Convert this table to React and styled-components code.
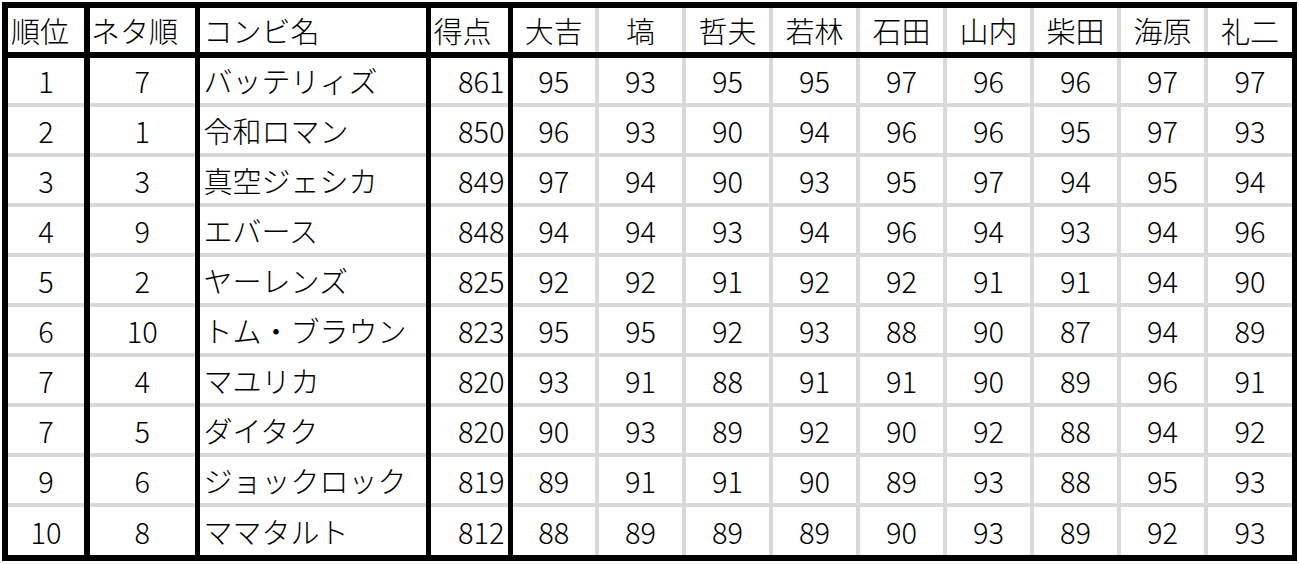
import React from "react";
import styled, { createGlobalStyle } from "styled-components";

const GlobalStyle = createGlobalStyle`
  html, body {
    margin: 0;
    padding: 0;
    background: #ffffff;
  }
  body {
    font-family: "Noto Sans CJK JP", "Noto Sans", sans-serif;
    color: #000;
  }
`;

const LINE = {
  thick: "6px solid #000",
  bold: "5px solid #000",
  thin: "4px solid #d9d9d9",
  none: "none",
};

const Frame = styled.div`
  margin: 2px 0 0 2px;
  width: fit-content;
  border-top: 6px solid #000;
  border-left: 6px solid #000;
  border-right: 5px solid #000;
  border-bottom: 6px solid #000;
`;

const ScoreTable = styled.table`
  border-collapse: collapse;
  table-layout: fixed;
  width: 1284px;
  font-size: 29px;
  font-weight: 300;
  line-height: 1;
`;

const HeadRow = styled.tr`
  height: 47px;
`;

const BodyRow = styled.tr`
  height: 50px;
`;

const Cell = styled.td`
  padding: 0 ${(p) => p.$padR || 0}px 0 ${(p) => p.$padL || 0}px;
  text-align: ${(p) => p.$align || "center"};
  vertical-align: middle;
  white-space: nowrap;
  overflow: hidden;
  font-weight: 300;
  border-right: ${(p) => LINE[p.$right || "none"]};
  border-bottom: ${(p) => LINE[p.$bottom || "none"]};
`;

const columns = [
  { label: "順位", width: 79, align: "center", headAlign: "left", headPad: 3, right: "thick" },
  { label: "ネタ順", width: 110, align: "center", headAlign: "left", headPad: 1, right: "bold" },
  { label: "コンビ名", width: 231, align: "left", headAlign: "left", headPad: 4, padL: 4, right: "bold" },
  { label: "得点", width: 82, align: "right", headAlign: "left", headPad: 3, padR: 3, right: "bold" },
  { label: "大吉", width: 87, right: "thin" },
  { label: "塙", width: 87, right: "thin" },
  { label: "哲夫", width: 87, right: "thin" },
  { label: "若林", width: 87, right: "thin" },
  { label: "石田", width: 87, right: "thin" },
  { label: "山内", width: 87, right: "thin" },
  { label: "柴田", width: 87, right: "thin" },
  { label: "海原", width: 87, right: "thin" },
  { label: "礼二", width: 86, right: "none" },
];

const rows = [
  [1, 7, "バッテリィズ", 861, 95, 93, 95, 95, 97, 96, 96, 97, 97],
  [2, 1, "令和ロマン", 850, 96, 93, 90, 94, 96, 96, 95, 97, 93],
  [3, 3, "真空ジェシカ", 849, 97, 94, 90, 93, 95, 97, 94, 95, 94],
  [4, 9, "エバース", 848, 94, 94, 93, 94, 96, 94, 93, 94, 96],
  [5, 2, "ヤーレンズ", 825, 92, 92, 91, 92, 92, 91, 91, 94, 90],
  [6, 10, "トム・ブラウン", 823, 95, 95, 92, 93, 88, 90, 87, 94, 89],
  [7, 4, "マユリカ", 820, 93, 91, 88, 91, 91, 90, 89, 96, 91],
  [7, 5, "ダイタク", 820, 90, 93, 89, 92, 90, 92, 88, 94, 92],
  [9, 6, "ジョックロック", 819, 89, 91, 91, 90, 89, 93, 88, 95, 93],
  [10, 8, "ママタルト", 812, 88, 89, 89, 89, 90, 93, 89, 92, 93],
];

export default function App() {
  return (
    <>
      <GlobalStyle />
      <Frame>
        <ScoreTable>
          <colgroup>
            {columns.map((c) => (
              <col key={c.label} style={{ width: c.width }} />
            ))}
          </colgroup>
          <thead>
            <HeadRow>
              {columns.map((c) => (
                <Cell
                  as="th"
                  key={c.label}
                  $align={c.headAlign || "center"}
                  $padL={c.headPad}
                  $right={c.right}
                  $bottom="thick"
                >
                  {c.label}
                </Cell>
              ))}
            </HeadRow>
          </thead>
          <tbody>
            {rows.map((r, ri) => (
              <BodyRow key={ri}>
                {r.map((v, ci) => {
                  const c = columns[ci];
                  return (
                    <Cell
                      key={ci}
                      $align={c.align || "center"}
                      $padL={c.padL}
                      $padR={c.padR}
                      $right={c.right}
                      $bottom={ri === rows.length - 1 ? "none" : "thin"}
                    >
                      {v}
                    </Cell>
                  );
                })}
              </BodyRow>
            ))}
          </tbody>
        </ScoreTable>
      </Frame>
    </>
  );
}
